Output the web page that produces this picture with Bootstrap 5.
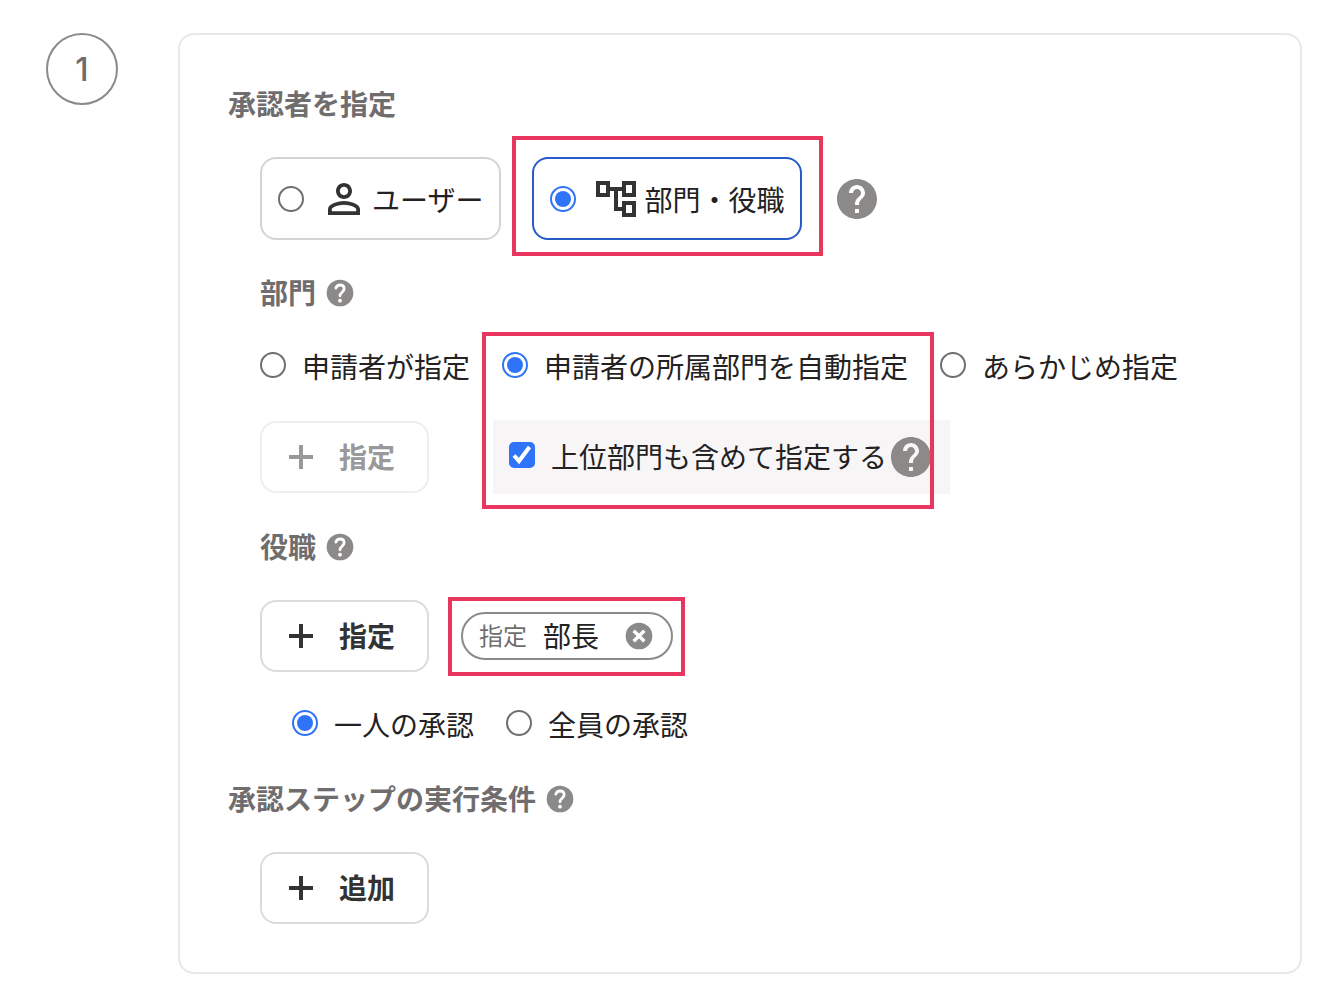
<!DOCTYPE html>
<html lang="ja">
<head>
<meta charset="utf-8">
<meta name="viewport" content="width=device-width, initial-scale=1">
<title>承認ステップ</title>
<link rel="stylesheet" href="https://cdn.jsdelivr.net/npm/bootstrap@5.3.0/dist/css/bootstrap.min.css">
<style>
body{font-family:"Noto Sans CJK JP",sans-serif;font-size:28px;line-height:42px;color:#232121;background:#fff}
.page-wrap{padding:33px 40px 32px 46px;gap:60px}
.step-no{width:72px;height:72px;padding-top:2px;border:2px solid #8c8989;color:#706d6e;font-family:Inter,sans-serif;font-size:32px;font-weight:500}
.step-card{border:2px solid #e9e7e7;border-radius:16px;padding:48px}
.stack{gap:32px}
.indent{padding-left:32px}
.sec-title{font-size:28px;line-height:40px;padding-bottom:2px;font-weight:700;color:#706d6e}
.sec-title .help-btn{margin-top:2px}
.ico{display:block;flex:none}
.ico-48{width:48px;height:48px}
.ico-32{width:32px;height:32px}
.help-btn{border:0;padding:0;background:none;color:#8c8989}
.choice{gap:16px;cursor:pointer}
.radio-line{line-height:40px;padding-bottom:2px}
.option-box{border:2px solid #d6d3d3;border-radius:16px;padding:16px 16px 15px}
.option-box.active{border-color:#285ac8}
.option-gap{column-gap:31px}
.icon-text{gap:4px}
input.form-check-input{width:26px;height:26px;margin:0;flex:none;border:2px solid #6f6f6f;background:#fff}
input.form-check-input[type=radio]:checked{border-color:#2f74f8;padding:3px;background:#2f74f8 content-box}
input.form-check-input[type=checkbox]{border-radius:5px}
input.form-check-input[type=checkbox]:checked{border-color:#2f74f8;background:#2f74f8 url("data:image/svg+xml,%3Csvg xmlns='http://www.w3.org/2000/svg' viewBox='0 0 22 22'%3E%3Cpath d='M3 11.5L8 17L18.5 3' fill='none' stroke='%23fff' stroke-width='4'/%3E%3C/svg%3E") center/22px no-repeat}
.btn.btn-add{--bs-btn-color:#333;--bs-btn-bg:#fff;--bs-btn-border-color:#dcdada;--bs-btn-disabled-color:#999;--bs-btn-disabled-bg:#fff;--bs-btn-disabled-border-color:#efeded;--bs-btn-disabled-opacity:1;border-width:2px;border-radius:16px;font-size:28px;line-height:40px;font-weight:700;padding:13px 32px 15px 26px;gap:25px}
.btn-add .ico{margin-top:2px}
.sub-panel{background:#f7f5f6;padding:13px 15px 13px 16px;margin-left:64px}
.tag-chip{height:48px;border:2px solid #8c8989;padding:0 16px;gap:16px}
.tag-chip span{line-height:40px;padding-bottom:2px}
.tag-chip .tag-kind{font-size:24px;color:#706d6e}
.tag-close{margin-left:8px}
.marker{position:absolute;border:4px solid #e8365f;pointer-events:none;z-index:2}
.marker-option{inset:-21px -21px -16px -20px}
.marker-auto{top:-14px;left:-20px;right:-26px;height:177px}
.marker-chip{inset:-15px -12px -16px -13px}
</style>
</head>
<body>
<svg class="d-none" aria-hidden="true">
  <symbol id="i-help" viewBox="0 0 24 24"><path fill="currentColor" d="M12 2C6.48 2 2 6.48 2 12s4.48 10 10 10 10-4.48 10-10S17.52 2 12 2zm1 17h-2v-2h2v2zm2.07-7.75l-.9.92C13.45 12.9 13 13.5 13 15h-2v-.5c0-1.1.45-2.1 1.17-2.83l1.24-1.26c.37-.36.59-.86.59-1.41 0-1.1-.9-2-2-2s-2 .9-2 2H8c0-2.21 1.79-4 4-4s4 1.79 4 4c0 .88-.36 1.68-.93 2.25z"/></symbol>
  <symbol id="i-help-round" viewBox="0 0 24 24"><circle cx="12" cy="12" r="10" fill="currentColor"/><path d="M8.900 8.300C9.500 6.700 10.600 6 12 6c1.800 0 3.100 1.100 3.100 2.800 0 2.500-3.100 2.700-3.100 5.300" fill="none" stroke="#fff" stroke-width="2.100" stroke-linecap="round"/><circle cx="12" cy="17.800" r="1.400" fill="#fff"/></symbol>
  <symbol id="i-plus" viewBox="0 0 26 26"><path d="M13 1v24M1 13h24" fill="none" stroke="currentColor" stroke-width="4"/></symbol>
</svg>
<main class="page-wrap d-flex align-items-start">
  <div class="step-no rounded-circle d-flex align-items-center justify-content-center flex-shrink-0">1</div>
  <section class="step-card flex-grow-1 d-flex flex-column stack">
    <h2 class="sec-title m-0">承認者を指定</h2>

    <div class="indent d-flex flex-column stack">
      <div class="d-flex flex-wrap align-items-center option-gap">
        <label class="option-box choice d-flex align-items-center" for="byUser">
          <input class="form-check-input" type="radio" name="target" id="byUser">
          <span class="d-flex align-items-center icon-text">
            <svg class="ico ico-48" viewBox="0 0 24 24" fill="#333" aria-hidden="true"><path d="M12 5.900c1.160 0 2.100.94 2.100 2.100s-.94 2.100-2.100 2.100S9.900 9.160 9.900 8s.94-2.100 2.100-2.100m0 9c2.970 0 6.100 1.460 6.100 2.100v1.100H5.900V17c0-.64 3.130-2.100 6.100-2.100M12 4C9.790 4 8 5.790 8 8s1.790 4 4 4 4-1.790 4-4-1.790-4-4-4zm0 9c-2.670 0-8 1.340-8 4v3h16v-3c0-2.660-5.330-4-8-4z"/></svg>
            ユーザー
          </span>
        </label>
        <div class="position-relative">
          <label class="option-box active choice d-flex align-items-center" for="byDept">
            <input class="form-check-input" type="radio" name="target" id="byDept" checked>
            <span class="d-flex align-items-center icon-text">
              <svg class="ico ico-48" viewBox="0 0 24 24" fill="#333" aria-hidden="true"><path d="M22 11V3h-7v3H9V3H2v8h7V8h2v10h4v3h7v-8h-7v3h-2V8h2v3h7zM7 9H4V5h3v4zm10 6h3v4h-3v-4zm0-10h3v4h-3V5z"/></svg>
              部門・役職
            </span>
          </label>
          <span class="marker marker-option"></span>
        </div>
        <button class="help-btn" type="button" aria-label="ヘルプ"><svg class="ico ico-48"><use href="#i-help"/></svg></button>
      </div>

      <h3 class="sec-title m-0 d-flex align-items-center gap-2">部門 <button class="help-btn" type="button" aria-label="ヘルプ"><svg class="ico ico-32"><use href="#i-help-round"/></svg></button></h3>

      <div class="d-flex flex-wrap stack">
        <label class="choice radio-line d-flex align-items-baseline" for="deptApplicant"><input class="form-check-input" type="radio" name="dept" id="deptApplicant">申請者が指定</label>
        <div class="position-relative">
          <label class="choice radio-line d-flex align-items-baseline" for="deptAuto"><input class="form-check-input" type="radio" name="dept" id="deptAuto" checked>申請者の所属部門を自動指定</label>
          <span class="marker marker-auto"></span>
        </div>
        <label class="choice radio-line d-flex align-items-baseline" for="deptPreset"><input class="form-check-input" type="radio" name="dept" id="deptPreset">あらかじめ指定</label>
      </div>

      <div class="d-flex align-items-center">
        <button class="btn btn-add d-flex align-items-center" type="button" disabled><svg class="ico" width="26" height="26"><use href="#i-plus"/></svg>指定</button>
        <div class="sub-panel d-flex align-items-center">
          <label class="choice radio-line d-flex align-items-baseline" for="withUpper"><input class="form-check-input" type="checkbox" id="withUpper" checked>上位部門も含めて指定する</label>
          <button class="help-btn" type="button" aria-label="ヘルプ"><svg class="ico ico-48"><use href="#i-help"/></svg></button>
        </div>
      </div>

      <h3 class="sec-title m-0 d-flex align-items-center gap-2">役職 <button class="help-btn" type="button" aria-label="ヘルプ"><svg class="ico ico-32"><use href="#i-help-round"/></svg></button></h3>

      <div class="d-flex align-items-center stack">
        <button class="btn btn-add d-flex align-items-center" type="button"><svg class="ico" width="26" height="26"><use href="#i-plus"/></svg>指定</button>
        <div class="position-relative">
          <div class="tag-chip rounded-pill d-flex align-items-center">
            <span class="tag-kind">指定</span>
            <span>部長</span>
            <button class="help-btn tag-close" type="button" aria-label="削除"><svg class="ico ico-32" viewBox="0 0 24 24"><circle cx="12" cy="12" r="10" fill="currentColor"/><path d="M8 8l8 8M16 8l-8 8" fill="none" stroke="#fff" stroke-width="2.600"/></svg></button>
          </div>
          <span class="marker marker-chip"></span>
        </div>
      </div>

      <div class="indent d-flex flex-wrap stack">
        <label class="choice radio-line d-flex align-items-baseline" for="anyOne"><input class="form-check-input" type="radio" name="rule" id="anyOne" checked>一人の承認</label>
        <label class="choice radio-line d-flex align-items-baseline" for="everyOne"><input class="form-check-input" type="radio" name="rule" id="everyOne">全員の承認</label>
      </div>
    </div>

    <h2 class="sec-title m-0 d-flex align-items-center gap-2">承認ステップの実行条件 <button class="help-btn" type="button" aria-label="ヘルプ"><svg class="ico ico-32"><use href="#i-help-round"/></svg></button></h2>

    <div class="indent d-flex">
      <button class="btn btn-add d-flex align-items-center" type="button"><svg class="ico" width="26" height="26"><use href="#i-plus"/></svg>追加</button>
    </div>
  </section>
</main>
<script src="https://cdn.jsdelivr.net/npm/bootstrap@5.3.0/dist/js/bootstrap.bundle.min.js"></script>
</body>
</html>
